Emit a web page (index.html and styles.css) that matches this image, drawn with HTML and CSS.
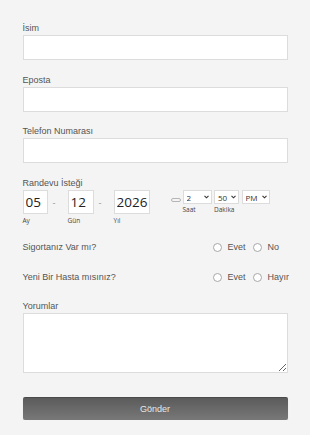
FILE: index.html
```html
<!DOCTYPE html>
<html lang="tr">
<head>
  <meta charset="UTF-8">
  <meta name="viewport" content="width=device-width, initial-scale=1.0">
  <title>Randevu Formu</title>
  <link rel="stylesheet" href="styles.css">
</head>
<body>
  <form class="appt">
    <div class="field">
      <label class="lbl" for="name">İsim</label>
      <input id="name" class="text" type="text">
    </div>
    <div class="field">
      <label class="lbl" for="email">Eposta</label>
      <input id="email" class="text" type="email">
    </div>
    <div class="field">
      <label class="lbl" for="phone">Telefon Numarası</label>
      <input id="phone" class="text" type="tel">
    </div>
    <div class="field date-field">
      <span class="lbl">Randevu İsteği</span>
      <div class="when">
        <div class="part"><input class="num w-day" type="text" value="05"><small>Ay</small></div>
        <span class="dash">-</span>
        <div class="part"><input class="num w-mon" type="text" value="12"><small>Gün</small></div>
        <span class="dash">-</span>
        <div class="part"><input class="num w-year" type="text" value="2026"><small>Yıl</small></div>
        <span class="pill"></span>
        <div class="part">
          <span class="sel-wrap s-hour">
            <select class="sel"><option>2</option></select>
            <svg class="chev" viewBox="0 0 6 4"><path d="M0.6 0.6 L3 3 L5.4 0.6" /></svg>
          </span>
          <small>Saat</small>
        </div>
        <div class="part">
          <span class="sel-wrap s-min">
            <select class="sel"><option>50</option></select>
            <svg class="chev" viewBox="0 0 6 4"><path d="M0.6 0.6 L3 3 L5.4 0.6" /></svg>
          </span>
          <small>Dakika</small>
        </div>
        <div class="part">
          <span class="sel-wrap s-ampm">
            <select class="sel"><option>PM</option></select>
            <svg class="chev" viewBox="0 0 6 4"><path d="M0.6 0.6 L3 3 L5.4 0.6" /></svg>
          </span>
        </div>
      </div>
    </div>
    <div class="choice first">
      <span class="q">Sigortanız Var mı?</span>
      <div class="opts">
        <label><input type="radio" name="ins">Evet</label>
        <label><input type="radio" name="ins">No</label>
      </div>
    </div>
    <div class="choice">
      <span class="q">Yeni Bir Hasta mısınız?</span>
      <div class="opts">
        <label><input type="radio" name="newp">Evet</label>
        <label><input type="radio" name="newp">Hayır</label>
      </div>
    </div>
    <div class="field notes">
      <label class="lbl" for="notes">Yorumlar</label>
      <textarea id="notes"></textarea>
    </div>
    <button type="button" class="send">Gönder</button>
  </form>
</body>
</html>
```

FILE: styles.css
```css
:root {
  --bg: #f4f4f4;
  --line: #dcdcdc;
  --label: #555555;
}
* { box-sizing: border-box; margin: 0; padding: 0; }
body {
  background: var(--bg);
  font-family: 'Liberation Sans', Arial, sans-serif;
  color: var(--label);
}
.appt {
  width: 265px;
  margin: 0 auto;
  padding-top: 23px;
}
.field { margin-bottom: 14.5px; }
.lbl {
  display: block;
  font-size: 9px;
  line-height: 11px;
  margin-bottom: 1px;
  color: var(--label);
}
.text {
  display: block;
  width: 100%;
  height: 25px;
  border: 1px solid var(--line);
  background: #fff;
  outline: none;
}

/* date + time */
.date-field { margin-bottom: 0; }
.date-field .lbl { margin-bottom: 1.5px; }
.when {
  display: flex;
  align-items: flex-start;
}
.part {
  display: flex;
  flex-direction: column;
}
.part small {
  font-family: 'Open Sans', sans-serif;
  font-size: 6.5px;
  line-height: 9px;
  margin-top: 1.5px;
  color: #444;
}
.num {
  height: 24px;
  border: 1px solid var(--line);
  background: #fff;
  font-family: 'Open Sans', sans-serif;
  font-size: 13.5px;
  color: #222;
  padding: 0 0 0 2px;
  outline: none;
}
.w-day { width: 25px; }
.w-mon { width: 26px; }
.w-year { width: 36px; }
.dash {
  width: 20px;
  padding-left: 5px;
  font-size: 9px;
  line-height: 26px;
  color: #999;
}
.pill {
  width: 10px;
  height: 4px;
  margin: 8px 2px 0 21px;
  border: 1px solid #b5b5b5;
  border-radius: 2px;
}
.sel-wrap {
  position: relative;
  display: block;
  height: 14px;
  margin-right: 2.5px;
}
.sel {
  appearance: none;
  display: block;
  width: 100%;
  height: 14px;
  border: 1px solid var(--line);
  border-radius: 0;
  background: #fff;
  font-family: 'Open Sans', sans-serif;
  font-size: 8px;
  color: #333;
  padding: 0 0 0 3px;
  outline: none;
}
.chev {
  position: absolute;
  right: 3px;
  top: 5px;
  width: 5px;
  height: 4px;
  fill: none;
  stroke: #333;
  stroke-width: 1.3;
  pointer-events: none;
}
.s-hour { width: 29px; }
.s-min { width: 25px; }
.s-ampm { width: 28px; }
.part .sel-wrap + small { margin-top: 1px; }

/* yes / no rows */
.choice {
  display: flex;
  align-items: center;
  height: 30px;
  font-size: 9px;
}
.choice.first { margin-top: 7.5px; }
.q { width: 190px; flex-shrink: 0; }
.opts {
  display: flex;
  font-size: 9px;
}
.opts label {
  display: flex;
  align-items: center;
  margin-right: 7px;
}
.opts label:last-child { margin-right: 0; }
.opts input {
  appearance: none;
  width: 9px;
  height: 9px;
  margin-right: 6px;
  border: 1px solid #a8a8a8;
  border-radius: 50%;
  background: #fff;
}

.notes { margin-top: 8.5px; margin-bottom: 24px; }
.notes .lbl { margin-bottom: 1.5px; }
textarea {
  display: block;
  width: 100%;
  height: 60px;
  border: 1px solid var(--line);
  background: #fff;
  outline: none;
}

.send {
  display: block;
  width: 100%;
  height: 23px;
  border: none;
  border-top: 1px solid #4a4a4a;
  border-radius: 2px;
  background: linear-gradient(#5b5b5b, #787878);
  box-shadow: 0 1px 1px rgba(0,0,0,0.15);
  font-family: 'Liberation Sans', Arial, sans-serif;
  font-size: 9px;
  color: #e8e8e8;
  cursor: pointer;
}
```
